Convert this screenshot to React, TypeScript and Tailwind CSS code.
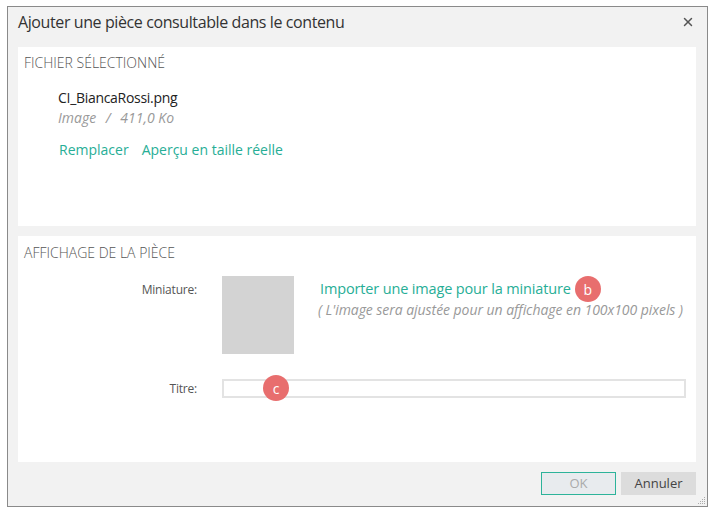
import { X } from 'lucide-react';

const font = { fontFamily: '"Open Sans", "Noto Sans", sans-serif' };

const Badge = ({ letter }: { letter: string }) => (
  <span className="inline-flex h-[26px] w-[26px] items-center justify-center rounded-full bg-[#e86e6e] text-[14px] text-white">
    {letter}
  </span>
);

const PanelTitle = ({ children }: { children: string }) => (
  <div className="text-[14px] leading-none font-light text-[#555]">{children}</div>
);

const App = () => {
  return (
    <div className="h-[514px] w-[714px] bg-white pt-[6px] pl-[7px]" style={font}>
      <div className="relative flex h-[501px] w-[701px] flex-col border border-[#8a8a8a] bg-[#f2f2f2]">
        <div className="flex h-[40px] items-start justify-between pt-[4px] pr-[12px] pl-[10px]">
          <span className="text-[16px] leading-[22px] tracking-[-0.4px] text-[#333]">
            Ajouter une pièce consultable dans le contenu
          </span>
          <X size={14} strokeWidth={2.5} className="mt-[4px] text-[#555]" />
        </div>

        <div className="flex flex-1 flex-col gap-[10px] pr-[11px] pl-[10px]">
          <section className="h-[179px] bg-white px-[6px] pt-[9px]">
            <PanelTitle>FICHIER SÉLECTIONNÉ</PanelTitle>
            <div className="mt-[18px] pl-[34px]">
              <div className="text-[14px] leading-[20px] tracking-[-0.3px] text-[#222]">CI_BiancaRossi.png</div>
              <div className="text-[14px] leading-[20px] text-[#999] italic">
                Image <span className="px-[6px]">/</span> 411,0 Ko
              </div>
              <div className="mt-[12px] flex gap-[13px] pl-px text-[14px] leading-[20px] text-[#27ae96]">
                <span>Remplacer</span>
                <span>Aperçu en taille réelle</span>
              </div>
            </div>
          </section>

          <section className="h-[226px] bg-white px-[6px] pt-[10px]">
            <PanelTitle>AFFICHAGE DE LA PIÈCE</PanelTitle>
            <div className="mt-[16px] flex">
              <div className="w-[173px] pt-[5px] text-right text-[12px] leading-[18px] tracking-[-0.2px] text-[#555]">
                Miniature:
              </div>
              <div className="ml-[25px] h-[78px] w-[72px] bg-[#d3d3d3]" />
              <div className="ml-[26px]">
                <div className="flex items-center gap-[4px]">
                  <span className="text-[14.5px] leading-[26px] tracking-[-0.15px] text-[#27ae96]">
                    Importer une image pour la miniature
                  </span>
                  <Badge letter="b" />
                </div>
                <div className="-mt-px -ml-[2px] text-[14px] leading-[18px] tracking-[-0.05px] text-[#999] italic">
                  ( L'image sera ajustée pour un affichage en 100x100 pixels )
                </div>
              </div>
            </div>
            <div className="mt-[25px] flex items-center">
              <div className="w-[173px] text-right text-[12px] tracking-[-0.2px] text-[#555]">Titre:</div>
              <div className="relative ml-[25px] h-[19px] w-[464px] border-2 border-[#e3e3e3] bg-white">
                <div className="absolute top-[-6px] left-[39px]">
                  <Badge letter="c" />
                </div>
              </div>
            </div>
          </section>

          <div className="flex flex-1 items-start justify-end gap-[5px]">
            <button className="h-[23px] w-[75px] border border-[#2db39a] bg-[#e8ebee] text-[13px] text-[#aaa]">
              OK
            </button>
            <button className="h-[23px] w-[75px] bg-[#dcdcdc] text-[13px] text-[#444]">Annuler</button>
          </div>
        </div>

        <svg className="absolute right-[1px] bottom-[1px]" width="10" height="10" viewBox="0 0 10 10">
          {[
            [8, 2],
            [6, 4],
            [8, 4],
            [4, 6],
            [6, 6],
            [8, 6],
            [2, 8],
            [4, 8],
            [6, 8],
            [8, 8],
          ].map(([x, y]) => (
            <rect key={`${x}-${y}`} x={x} y={y} width="1" height="1" fill="#aaa" />
          ))}
        </svg>
      </div>
    </div>
  );
};

export default App;
